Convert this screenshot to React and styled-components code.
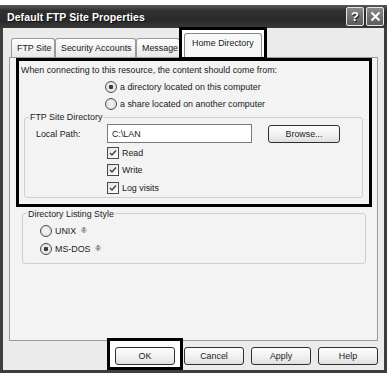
import styled, { createGlobalStyle } from "styled-components";

const GlobalStyle = createGlobalStyle`
  body {
    margin: 0;
    background: #fff;
    font-family: "Liberation Sans", Arial, sans-serif;
    color: #1a1a1a;
  }
`;

const Window = styled.div`
  margin-top: 5px;
  width: 387px;
  height: 368px;
  display: flex;
  flex-direction: column;
`;

const TitleBar = styled.div`
  height: 23px;
  display: flex;
  align-items: center;
  padding: 0 3px 0 7px;
  background: linear-gradient(#5a5a5a, #303030 25%, #2a2a2a 70%, #3a3a3a);
  color: #fff;
  font-weight: bold;
  font-size: 10.5px;
  letter-spacing: 0.1px;
  text-shadow: 1px 1px 0 #111;
`;

const Title = styled.span`
  flex: 1;
`;

const TitleButton = styled.div`
  width: 16px;
  height: 17px;
  margin-left: 2px;
  border: 1px solid #e6e6e6;
  border-radius: 2px;
  background: linear-gradient(#8a8a8a, #5c5c5c);
  display: flex;
  align-items: center;
  justify-content: center;
  color: #fff;
  font-size: 13px;
  font-weight: bold;
`;

const Frame = styled.div`
  flex: 1;
  display: flex;
  flex-direction: column;
  background: #ebebeb;
  border: 3px solid #3e3e3e;
  border-top: none;
  padding: 5px 6px 0 6px;
`;

const TabRow = styled.div`
  height: 24px;
  display: flex;
  align-items: flex-end;
  padding-left: 2px;
  position: relative;
  z-index: 3;
`;

const Tab = styled.div`
  width: ${(p) => p.w}px;
  height: 19px;
  box-sizing: border-box;
  border: 1px solid #9a9a9a;
  border-bottom: none;
  border-radius: 3px 3px 0 0;
  background: linear-gradient(#fdfdfd, #e8e8e8);
  font-size: 8.9px;
  display: flex;
  align-items: center;
  padding-left: 5px;
  white-space: nowrap;
  overflow: hidden;
`;

const TabMark = styled.div`
  border: 3px solid #000;
  background: #fff;
  padding: 3px 2px 0 2px;
  margin-left: -1px;
  margin-bottom: -3px;
`;

const ActiveTab = styled(Tab)`
  height: 24px;
  background: #f7f7f7;
  border-color: #8a8a8a;
  padding-left: 7px;
  padding-bottom: 5px;
`;

const Panel = styled.div`
  height: 284px;
  box-sizing: border-box;
  border: 1px solid #9a9a9a;
  background: #f3f3f3;
  padding: 0 5px 0 6px;
  display: flex;
  flex-direction: column;
`;

const Callout = styled.div`
  border: 3px solid #000;
  padding: 3px 3px 6px 2px;
  display: flex;
  flex-direction: column;
`;

const Text = styled.div`
  font-size: 8.9px;
  line-height: 12px;
  white-space: nowrap;
`;

const Options = styled.div`
  display: flex;
  flex-direction: column;
  margin-left: ${(p) => p.indent}px;
  margin-top: ${(p) => p.top || 0}px;
`;

const Row = styled.div`
  height: ${(p) => p.h || 17}px;
  display: flex;
  align-items: center;
  gap: 3px;
  font-size: 8.9px;
  white-space: nowrap;
`;

const RadioDot = styled.span`
  width: 10px;
  height: 10px;
  border-radius: 50%;
  border: 1px solid #4a4a4a;
  background: radial-gradient(circle, ${(p) => (p.on ? "#3a3a3a 0 2px, #e8e8e8 2.5px" : "#f4f4f4 0, #dcdcdc 100%")});
`;

const Check = styled.span`
  width: 10px;
  height: 10px;
  border: 1px solid #4a4a4a;
  background: linear-gradient(135deg, #e2e2e2, #fff);
  display: flex;
  align-items: center;
  justify-content: center;
`;

const Group = styled.fieldset`
  margin: 0 3px;
  padding: 0 0 ${(p) => p.pb || 0}px 0;
  border: 1px solid #cfcfcf;
  border-radius: 3px;
  min-inline-size: auto;
`;

const Legend = styled.legend`
  font-size: 8.9px;
  line-height: 10px;
  padding: 0 1px;
  margin-left: 4px;
  color: #222;
`;

const PathRow = styled.div`
  display: flex;
  align-items: center;
  height: 19px;
  margin-top: 2px;
  padding-left: 11px;
`;

const Label = styled.span`
  width: 71px;
  font-size: 8.9px;
`;

const Input = styled.div`
  width: 145px;
  height: 19px;
  box-sizing: border-box;
  border: 1px solid #7a7a7a;
  background: #fff;
  font-size: 8.9px;
  display: flex;
  align-items: center;
  padding-left: 4px;
`;

const Button = styled.div`
  width: ${(p) => p.w || 60}px;
  height: 18px;
  box-sizing: border-box;
  border: 1px solid #2f2f2f;
  border-radius: 3px;
  background: linear-gradient(#fdfdfd, #efefef 60%, #dedede);
  font-size: 8.9px;
  display: flex;
  align-items: center;
  justify-content: center;
  margin-left: ${(p) => p.ml || 0}px;
`;

const ButtonMark = styled.div`
  border: 3px solid #000;
  background: #fff;
  padding: 6px 5px 2px 5px;
  margin: -9px -6px -5px -8px;
  position: relative;
`;

const ListingGroup = styled(Group)`
  margin: 2px 6px 0 6px;
`;

const Footer = styled.div`
  display: flex;
  justify-content: flex-end;
  gap: 7px;
  padding-top: 6px;
`;

const Reg = styled.span`
  font-size: 7px;
  margin-left: 2px;
`;

function Radio({ on, h, children }) {
  return (
    <Row h={h}>
      <RadioDot on={on} />
      {children}
    </Row>
  );
}

function CheckRow({ children }) {
  return (
    <Row h={17.5}>
      <Check>
        <svg width="8" height="8" viewBox="0 0 8 8">
          <path d="M1 4 L3 6 L7 1.5" stroke="#444" strokeWidth="1.5" fill="none" />
        </svg>
      </Check>
      {children}
    </Row>
  );
}

export default function App() {
  return (
    <>
      <GlobalStyle />
      <Window>
        <TitleBar>
          <Title>Default FTP Site Properties</Title>
          <TitleButton>?</TitleButton>
          <TitleButton>
            <svg width="11" height="11" viewBox="0 0 11 11">
              <path d="M1.5 1.5 L9.5 9.5 M9.5 1.5 L1.5 9.5" stroke="#fff" strokeWidth="2" />
            </svg>
          </TitleButton>
        </TitleBar>
        <Frame>
          <TabRow>
            <Tab w={44}>FTP Site</Tab>
            <Tab w={81}>Security Accounts</Tab>
            <Tab w={44}>Message</Tab>
            <TabMark>
              <ActiveTab w={78}>Home Directory</ActiveTab>
            </TabMark>
          </TabRow>
          <Panel>
            <Callout>
              <Text>When connecting to this resource, the content should come from:</Text>
              <Options indent={84} top={2}>
                <Radio on>a directory located on this computer</Radio>
                <Radio>a share located on another computer</Radio>
              </Options>
              <Group>
                <Legend>FTP Site Directory</Legend>
                <PathRow>
                  <Label>Local Path:</Label>
                  <Input>C:\LAN</Input>
                  <Button w={72} ml={16}>Browse...</Button>
                </PathRow>
                <Options indent={82} top={1}>
                  <CheckRow>Read</CheckRow>
                  <CheckRow>Write</CheckRow>
                  <CheckRow>Log visits</CheckRow>
                </Options>
              </Group>
            </Callout>
            <ListingGroup pb={5}>
              <Legend>Directory Listing Style</Legend>
              <Options indent={17} top={3}>
                <Radio h={18}>UNIX<Reg>®</Reg></Radio>
                <Radio h={18} on>MS-DOS<Reg>®</Reg></Radio>
              </Options>
            </ListingGroup>
          </Panel>
          <Footer>
            <ButtonMark>
              <Button>OK</Button>
            </ButtonMark>
            <Button>Cancel</Button>
            <Button>Apply</Button>
            <Button>Help</Button>
          </Footer>
        </Frame>
      </Window>
    </>
  );
}
